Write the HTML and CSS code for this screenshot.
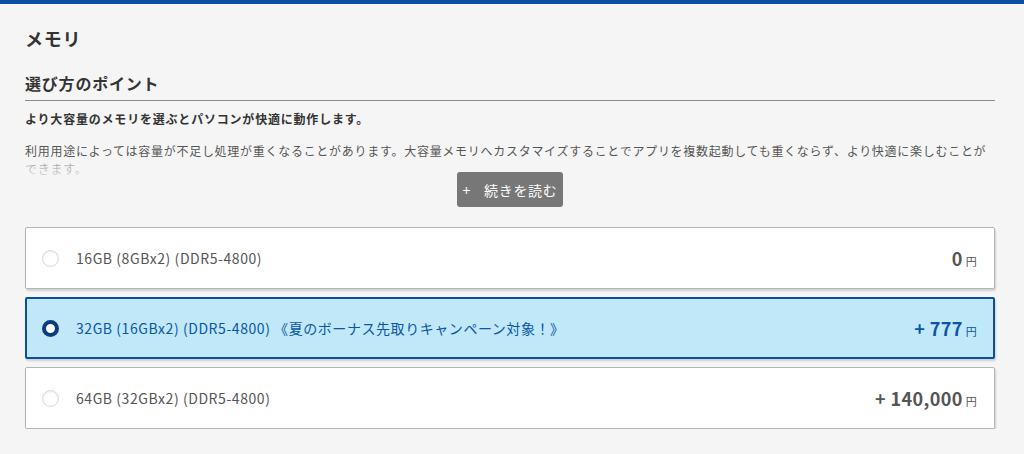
FILE: index.html
```html
<!DOCTYPE html>
<html lang="ja">
<head>
    <meta charset="UTF-8">
    <meta name="viewport" content="width=device-width, initial-scale=1.0">
    <title>メモリ</title>
    <link rel="stylesheet" href="styles.css">
</head>
<body>
    <div class="topbar"></div>
    <main class="section">
        <h2 class="title">メモリ</h2>
        <h3 class="point-title">選び方のポイント</h3>
        <p class="lead">より大容量のメモリを選ぶとパソコンが快適に動作します。</p>
        <div class="desc">
            <p>利用用途によっては容量が不足し処理が重くなることがあります。大容量メモリへカスタマイズすることでアプリを複数起動しても重くならず、より快適に楽しむことができます。</p>
        </div>
        <div class="more-wrap">
            <button class="more" type="button"><span class="plus">+</span>続きを読む</button>
        </div>
        <ul class="options">
            <li class="option">
                <span class="radio"></span>
                <span class="name">16GB (8GBx2) (DDR5-4800)</span>
                <span class="price">0<small>円</small></span>
            </li>
            <li class="option selected">
                <span class="radio"></span>
                <span class="name">32GB (16GBx2) (DDR5-4800) 《夏のボーナス先取りキャンペーン対象！》</span>
                <span class="price">+ 777<small>円</small></span>
            </li>
            <li class="option">
                <span class="radio"></span>
                <span class="name">64GB (32GBx2) (DDR5-4800)</span>
                <span class="price">+ 140,000<small>円</small></span>
            </li>
        </ul>
    </main>
</body>
</html>
```

FILE: styles.css
```css
body, html {
    margin: 0;
    padding: 0;
    background: #f5f5f5;
    font-family: "Noto Sans CJK JP", "Noto Sans", sans-serif;
    color: #333333;
    letter-spacing: 0.05em;
}
.topbar {
    height: 4px;
    background: #0a4fa0;
}
.section {
    padding: 0 29px 0 25px;
}
.title {
    margin: 0;
    padding-top: 21px;
    font-size: 18px;
    line-height: 26px;
    font-weight: bold;
    color: #333333;
}
.point-title {
    margin: 20px 0 0;
    padding-bottom: 5px;
    font-size: 16px;
    line-height: 24px;
    font-weight: bold;
    color: #333333;
    border-bottom: 1px solid #8a8a8a;
}
.lead {
    margin: 9px 0 0;
    font-size: 12px;
    line-height: 18px;
    font-weight: bold;
    color: #333333;
}
.desc {
    position: relative;
    margin-top: 14px;
    height: 36px;
    overflow: hidden;
}
.desc p {
    margin: 0;
    font-size: 12px;
    line-height: 18px;
    color: #555555;
    letter-spacing: 0.06em;
}
.desc::after {
    content: "";
    position: absolute;
    left: 0;
    right: 0;
    bottom: 0;
    height: 20px;
    background: linear-gradient(rgba(245, 245, 245, 0.4), rgba(245, 245, 245, 0.85));
}
.more-wrap {
    position: relative;
    display: flex;
    justify-content: center;
    margin-top: -6px;
}
.more {
    font-family: "Noto Sans CJK JP", "Noto Sans", sans-serif;
    letter-spacing: 0.05em;
    background: #777777;
    color: #ffffff;
    border: none;
    border-radius: 3px;
    font-size: 14px;
    height: 35px;
    width: 106px;
    padding: 0;
}
.more .plus {
    margin-right: 13px;
}
.options {
    list-style: none;
    margin: 20px 0 0;
    padding: 0;
    display: flex;
    flex-direction: column;
    gap: 8px;
}
.option {
    display: flex;
    align-items: center;
    height: 62px;
    box-sizing: border-box;
    background: #ffffff;
    border: 1px solid #b5b5b5;
    border-radius: 2px;
    box-shadow: 1px 2px 2px rgba(0, 0, 0, 0.15);
    padding: 0 17px 0 16px;
}
.radio {
    width: 17px;
    height: 17px;
    border-radius: 50%;
    border: 1px solid #d8d8d8;
    background: #ffffff;
    box-shadow: inset 0 1px 2px rgba(0, 0, 0, 0.08);
    box-sizing: border-box;
    margin-right: 17px;
    flex-shrink: 0;
}
.name {
    flex: 1;
    font-size: 14px;
    color: #555555;
    letter-spacing: 0.04em;
}
.price {
    font-size: 18px;
    font-weight: bold;
    color: #555555;
    letter-spacing: 0.02em;
}
.price small {
    font-size: 11px;
    font-weight: normal;
    margin-left: 3px;
}
.option.selected {
    background: #c0e8f8;
    border: 2px solid #0a4fa0;
    padding: 0 16px 0 15px;
}
.option.selected .radio {
    border: 4px solid #0a3d80;
    background: #ffffff;
    box-shadow: none;
}
.option.selected .name,
.option.selected .price {
    color: #0a55a5;
}
```
